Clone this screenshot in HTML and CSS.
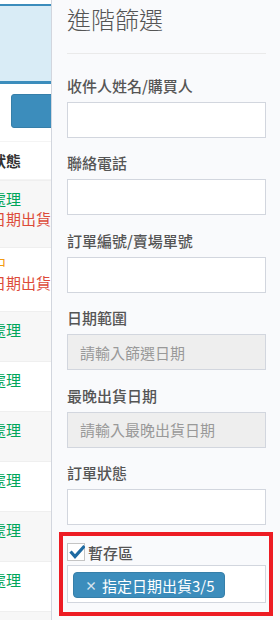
FILE: index.html
```html
<!DOCTYPE html>
<html lang="zh-Hant">

<head>
    <meta charset="UTF-8">
    <meta name="viewport" content="width=device-width, initial-scale=1.0">
    <title>訂單管理 - 進階篩選</title>
    <link rel="stylesheet" href="styles.css">
</head>

<body>
    <div class="page">
        <div class="callout"></div>
        <div class="toolbar">
            <button type="button" class="btn-primary"></button>
        </div>

        <div class="orders">
            <div class="orders-head">訂單狀態</div>
            <div class="order-row">
                <span class="text-green">尚未處理</span>
                <span class="text-red">指定日期出貨</span>
            </div>
            <div class="order-row compact">
                <span class="text-orange">處理中</span>
                <span class="text-red">指定日期出貨</span>
            </div>
            <div class="order-row"><span class="text-green">尚未處理</span></div>
            <div class="order-row"><span class="text-green">尚未處理</span></div>
            <div class="order-row"><span class="text-green">尚未處理</span></div>
            <div class="order-row"><span class="text-green">尚未處理</span></div>
            <div class="order-row"><span class="text-green">尚未處理</span></div>
            <div class="order-row"><span class="text-green">尚未處理</span></div>
            <div class="order-row last"></div>
        </div>
    </div>

    <!-- advanced filter panel, slides over the order list -->
    <aside class="control-sidebar">
        <h3 class="sidebar-title">進階篩選</h3>
        <hr class="sidebar-divider">

        <div class="form-group">
            <label for="buyer">收件人姓名/購買人</label>
            <input type="text" id="buyer" class="form-control">
        </div>
        <div class="form-group">
            <label for="phone">聯絡電話</label>
            <input type="text" id="phone" class="form-control">
        </div>
        <div class="form-group">
            <label for="orderNo">訂單編號/賣場單號</label>
            <input type="text" id="orderNo" class="form-control">
        </div>
        <div class="form-group">
            <label for="dateRange">日期範圍</label>
            <input type="text" id="dateRange" class="form-control" placeholder="請輸入篩選日期" disabled>
        </div>
        <div class="form-group">
            <label for="shipDate">最晚出貨日期</label>
            <input type="text" id="shipDate" class="form-control" placeholder="請輸入最晚出貨日期" disabled>
        </div>
        <div class="form-group">
            <label for="status">訂單狀態</label>
            <input type="text" id="status" class="form-control">
        </div>

        <div class="highlight">
            <label class="checkbox">
                <svg class="checkbox-icon" width="18" height="18" viewBox="0 0 18 18">
                    <rect x="0.5" y="0.5" width="17" height="17" fill="#fff" stroke="#c4c4c4"/>
                    <path d="M3.5 8.5 L8 13.5 L17.5 3" fill="none" stroke="#1d6aa2" stroke-width="3.2"/>
                </svg>
                暫存區
            </label>
            <div class="tag-box">
                <span class="tag"><span class="tag-remove">×</span>指定日期出貨3/5</span>
            </div>
        </div>
    </aside>
</body>

</html>
```

FILE: styles.css
```css
body {
    font-family: 'Noto Sans CJK TC', 'Noto Sans', sans-serif;
    font-size: 15px;
    color: #333;
    background-color: #fff;
    margin: 0;
    padding: 0;
    height: 620px;
    overflow: hidden;
    position: relative;
}

/* page under the panel */
.page {
    width: 100%;
    height: 620px;
    overflow: hidden;
}

.callout {
    margin-top: 4px;
    height: 75px;
    background-color: #d9ecf6;
    border-top: 2px solid #3c8dbc;
    border-bottom: 3px solid #3c8dbc;
}

.toolbar {
    padding: 10px 0 13px 11px;
}

.btn-primary {
    display: block;
    width: 90px;
    height: 34px;
    background-color: #3c8dbc;
    border: 1px solid #367fa9;
    border-radius: 3px;
}

.orders {
    margin-left: -39px;
    width: 360px;
    line-height: 20px;
}

.orders-head {
    font-weight: bold;
    color: #333;
    padding: 9px 0 8px;
    border-top: 1px solid #f4f4f4;
    border-bottom: 1px solid #f4f4f4;
}

.order-row {
    display: flex;
    flex-direction: column;
    box-sizing: border-box;
    min-height: 50px;
    padding: 8px 0 18px;
    border-top: 1px solid #efefef;
    white-space: nowrap;
}

.order-row:nth-child(even) {
    background-color: #f7f7f7;
}

.order-row.compact {
    padding-top: 5px;
}

.order-row.last {
    min-height: 9px;
    padding: 0;
}

.text-green {
    color: #00a65a;
}

.text-red {
    color: #dd4b39;
}

.text-orange {
    color: #f39c12;
}

/* control sidebar */
.control-sidebar {
    position: absolute;
    top: 0;
    right: 0;
    bottom: 0;
    width: 229px;
    box-sizing: border-box;
    padding: 6px 14px 0 15px;
    background-color: #f9fafc;
    border-left: 1px solid #d2d6de;
}

.sidebar-title {
    margin: 0;
    font-size: 24px;
    line-height: 26px;
    font-weight: 300;
    color: #555;
}

.sidebar-divider {
    margin: 21px 0 22px;
    border: 0;
    border-top: 1px solid #eaeaea;
}

.form-group {
    margin-bottom: 15.4px;
}

.form-group label {
    display: block;
    line-height: 20px;
    margin-bottom: 6px;
    color: #555;
    font-weight: 500;
}

.form-control {
    display: block;
    width: 100%;
    height: 36px;
    box-sizing: border-box;
    padding: 6px 12px;
    border: 1px solid #d2d6de;
    border-radius: 0;
    background-color: #fff;
    font-family: inherit;
    font-size: 15px;
    color: #555;
}

.form-control:disabled {
    background-color: #eee;
}

.form-control::placeholder {
    color: #999;
}

/* red frame round the draft area */
.highlight {
    margin: -8px -7px 0 -8px;
    padding: 5px 3px 9px 4px;
    border: 4px solid #ed1c24;
}

.checkbox {
    display: flex;
    align-items: center;
    gap: 3px;
    height: 22px;
    color: #555;
    font-weight: 500;
}

.checkbox-icon {
    display: block;
}

.tag-box {
    margin-top: 2px;
    padding: 6px 5px 4px;
    background-color: #fff;
    border: 1px solid #d2d6de;
}

.tag {
    display: inline-flex;
    align-items: center;
    height: 26px;
    box-sizing: border-box;
    padding: 0 9px 0 11px;
    background-color: #3c8dbc;
    border: 1px solid #367fa9;
    border-radius: 4px;
    color: #fff;
}

.tag-remove {
    color: #d6e4ee;
    font-size: 12px;
    font-weight: bold;
    margin-right: 5px;
}
```
